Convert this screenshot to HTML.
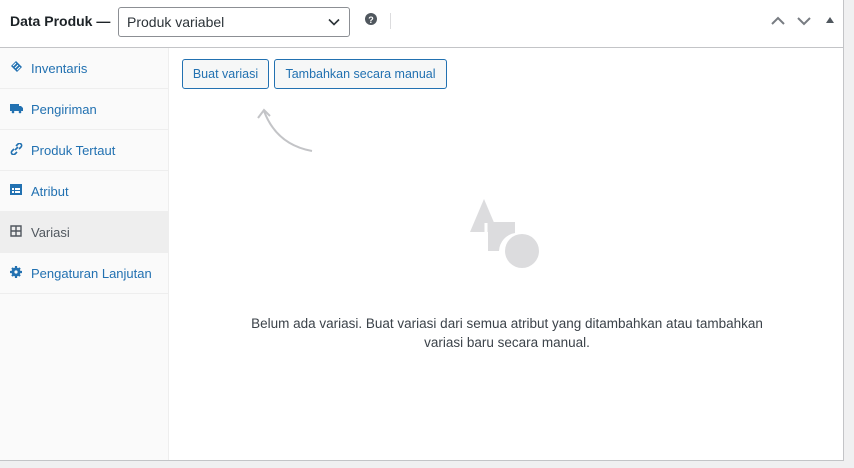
<!DOCTYPE html>
<html><head><style>
*{box-sizing:border-box;margin:0;padding:0}
body{width:854px;height:468px;background:#f0f0f1;font-family:"Liberation Sans",sans-serif;position:relative;overflow:hidden}
.panel{position:absolute;left:0;top:0;width:844px;height:461px;background:#fff;border-right:1px solid #c3c4c7;border-bottom:1px solid #c3c4c7}
.hdr{position:absolute;left:0;top:0;width:843px;height:48px;border-bottom:1px solid #c3c4c7}
.title{position:absolute;left:10px;top:13px;font-size:14px;font-weight:bold;color:#1d2327}
.sel{position:absolute;left:118px;top:7px;width:232px;height:30px;border:1px solid #8c8f94;border-radius:3px;font-size:14px;color:#2c3338;padding:6px 8px}
.side{position:absolute;left:0;top:48px;width:169px;height:412px;background:#fafafa;border-right:1px solid #eee}
.row{height:41px;border-bottom:1px solid #eee;font-size:13px;color:#2271b1;padding:13px 0 0 31px;position:relative}
.row.act{background:#eee;color:#50575e}
.ic{position:absolute;left:10px;top:13px;width:13px;height:12px}
.btn{position:absolute;top:59px;height:30px;border:1px solid #2271b1;border-radius:3px;color:#2271b1;font-size:12.5px;padding:7px 0;text-align:center;background:#f6f7f7;white-space:nowrap}
.msg{position:absolute;left:170px;top:314px;width:674px;text-align:center;font-size:13.5px;line-height:19px;color:#3c434a}
</style></head><body>
<div class="panel">
<div class="hdr">
<div class="title">Data Produk —</div>
<div class="sel">Produk variabel
<svg style="position:absolute;right:9px;top:10px" width="12" height="8" viewBox="0 0 12 8"><path d="M1 1.5L6 6.5 11 1.5" stroke="#2c3338" stroke-width="1.6" fill="none"/></svg></div>
<svg style="position:absolute;left:365px;top:13px" width="12" height="12"><circle cx="6" cy="6" r="6" fill="#50575e"/><text x="6" y="10" font-size="9" font-weight="bold" text-anchor="middle" fill="#fff" font-family="Liberation Sans">?</text></svg>
<div style="position:absolute;left:390px;top:13px;width:1px;height:16px;background:#dcdcde"></div>
<svg style="position:absolute;left:771px;top:16px" width="14" height="10"><path d="M1 8L7 2 13 8" stroke="#787c82" stroke-width="2" fill="none"/></svg>
<svg style="position:absolute;left:797px;top:16px" width="14" height="10"><path d="M1 2L7 8 13 2" stroke="#787c82" stroke-width="2" fill="none"/></svg>
<svg style="position:absolute;left:826px;top:17px" width="8" height="6"><path d="M0 6L4 0 8 6Z" fill="#50575e"/></svg>
</div>
<div class="side">
<div class="row"><svg class="ic" viewBox="0 0 13 12"><path d="M1 5L6 0 12 6 7 11Z" fill="#2271b1"/><path d="M3 5L6 2M5 7L8 4M7 9L10 6" stroke="#fff" stroke-width="1"/></svg>Inventaris</div>
<div class="row"><svg class="ic" viewBox="0 0 13 12"><rect x="0" y="2" width="9" height="7" fill="#2271b1"/><path d="M9 4h2l2 2v3H9Z" fill="#2271b1"/><circle cx="3" cy="10" r="1.3" fill="#2271b1"/><circle cx="10" cy="10" r="1.3" fill="#2271b1"/></svg>Pengiriman</div>
<div class="row"><svg class="ic" viewBox="0 0 13 12"><path d="M5 7L8 4M4 6L2 8a2 2 0 003 3l2-2M9 6l2-2a2 2 0 00-3-3L6 3" stroke="#2271b1" stroke-width="1.6" fill="none"/></svg>Produk Tertaut</div>
<div class="row"><svg class="ic" viewBox="0 0 13 12"><rect x="0" y="0" width="12" height="11" fill="#2271b1"/><rect x="2" y="4" width="2" height="2" fill="#fff"/><rect x="5" y="4" width="5" height="2" fill="#fff"/><rect x="2" y="7" width="2" height="2" fill="#fff"/><rect x="5" y="7" width="5" height="2" fill="#fff"/></svg>Atribut</div>
<div class="row act"><svg class="ic" viewBox="0 0 13 12"><path d="M1 1h10v10H1ZM6 1v10M1 6h10" stroke="#50575e" stroke-width="1.4" fill="none"/></svg>Variasi</div>
<div class="row"><svg class="ic" viewBox="0 0 13 12"><circle cx="6" cy="6" r="4.5" fill="#2271b1"/><path d="M6 0v12M0 6h12M2 2l8 8M10 2l-8 8" stroke="#2271b1" stroke-width="2.2"/><circle cx="6" cy="6" r="1.6" fill="#fafafa"/></svg>Pengaturan Lanjutan</div>
</div>
<div class="btn" style="left:182px;width:87px">Buat variasi</div>
<div class="btn" style="left:274px;width:173px">Tambahkan secara manual</div>
<svg style="position:absolute;left:255px;top:105px" width="62" height="50"><path d="M57 46C35 42 18 30 9 6" stroke="#c3c4c7" stroke-width="2" fill="none"/><path d="M3 13L9 5 15 11" stroke="#c3c4c7" stroke-width="2" fill="none"/></svg>
<svg style="position:absolute;left:469px;top:197px" width="72" height="72"><path d="M1 35L15 2 29 35Z" fill="#dcdcde"/><path d="M19 25h27v11a19 19 0 00-16 18H19Z" fill="#dcdcde"/><path d="M1 35L15 2 29 35Z" fill="none"/><circle cx="53" cy="54" r="17" fill="#dcdcde"/><path d="M17 26v30" stroke="#fff" stroke-width="3"/></svg>
<div class="msg">Belum ada variasi. Buat variasi dari semua atribut yang ditambahkan atau tambahkan<br>variasi baru secara manual.</div>
</div>
</body></html>
